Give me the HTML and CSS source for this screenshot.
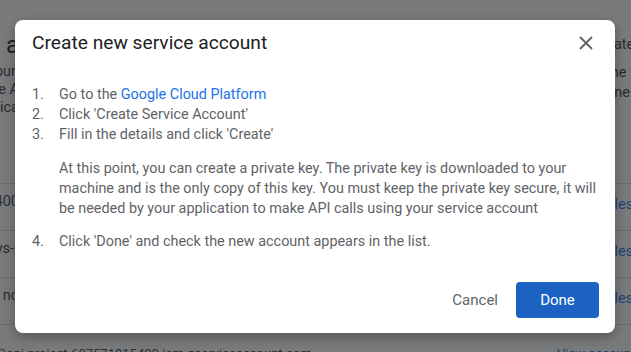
FILE: index.html
```html
<!DOCTYPE html>
<html lang="en">
<head>
    <meta charset="UTF-8">
    <meta name="viewport" content="width=device-width, initial-scale=1.0">
    <title>Create new service account</title>
    <link rel="stylesheet" href="styles.css">
</head>
<body>
    <!-- page behind the dialog -->
    <div class="page">
        <div class="page-top">
            <div class="edge-left">
                <div class="page-title">Create a</div>
                <div class="page-text">Service accoun</div>
                <div class="page-text">Create a service A</div>
                <div class="page-text">for the applica</div>
            </div>
            <div class="edge-right">
                <div class="page-action">Create</div>
                <div class="page-text">the</div>
                <div class="page-text">one</div>
            </div>
        </div>
        <div class="page-table">
            <div class="row"><div class="edge-left">607571915400</div><div class="edge-right link">Files</div></div>
            <div class="row"><div class="edge-left">firebase-adminsdk-ys-r</div><div class="edge-right link">Files</div></div>
            <div class="row"><div class="edge-left">App Engine default service account no</div><div class="edge-right link">Files</div></div>
            <div class="row last"><div class="edge-left">account@api-project-607571915400.iam.gserviceaccount.com</div><div class="edge-right link">View account</div></div>
        </div>
    </div>

    <div class="scrim"></div>

    <div class="dialog">
        <div class="dialog-head">
            <h1 class="dialog-title">Create new service account</h1>
            <button class="close" aria-label="Close">
                <svg width="14" height="14" viewBox="0 0 14 14"><path d="M1 1L13 13M13 1L1 13" stroke="#5f6368" stroke-width="1.8" fill="none"/></svg>
            </button>
        </div>
        <ol class="steps">
            <li><span class="num">1.</span><span>Go to the <a href="#">Google Cloud Platform</a></span></li>
            <li><span class="num">2.</span><span>Click 'Create Service Account'</span></li>
            <li><span class="num">3.</span><span>Fill in the details and click 'Create'</span></li>
            <li class="note">At this point, you can create a private key. The private key is downloaded to your machine and is the only copy of this key. You must keep the private key secure, it will be needed by your application to make API calls using your service account</li>
            <li><span class="num">4.</span><span>Click 'Done' and check the new account appears in the list.</span></li>
        </ol>
        <div class="actions">
            <button class="btn btn-text">Cancel</button>
            <button class="btn btn-primary">Done</button>
        </div>
    </div>
</body>
</html>
```

FILE: styles.css
```css
body {
    margin: 0;
    width: 631px;
    height: 352px;
    overflow: hidden;
    font-family: Roboto, "Liberation Sans", Arial, sans-serif;
    background: #fff;
    position: relative;
}

/* background page */
.page {
    height: 352px;
    overflow: hidden;
    color: #3c4043;
    font-size: 14.5px;
}
.page-top {
    display: flex;
    justify-content: space-between;
    height: 183px;
    padding-top: 31px;
    box-sizing: border-box;
}
.edge-left {
    width: 19px;
    display: flex;
    flex-direction: column;
    align-items: flex-end;
    overflow: hidden;
    white-space: nowrap;
}
.edge-right {
    width: 28px;
    overflow: hidden;
    white-space: nowrap;
    display: flex;
    flex-direction: column;
}
.page-title {
    font-size: 24px;
    line-height: 28px;
    color: #202124;
    margin-bottom: 4px;
}
.page-text {
    line-height: 18px;
    color: #3c4043;
}
.page-action {
    line-height: 28px;
    margin-bottom: 4px;
    margin-left: -11px;
}
.page-top .edge-right .page-text {
    line-height: 20px;
    margin-left: 3px;
}
.page-table .row {
    display: flex;
    justify-content: space-between;
    align-items: flex-start;
    height: 47px;
    padding-top: 9px;
    border-top: 1px solid #dadce0;
    box-sizing: border-box;
}
.page-table .row .edge-right {
    padding-top: 3px;
}
.page-table .row.last {
    padding-top: 21px;
    font-size: 13px;
}
.page-table .row.last .edge-left {
    width: 0;
    align-items: flex-start;
    overflow: visible;
    margin-left: -52px;
}
.page-table .row.last .edge-right {
    padding-top: 0;
    width: 74px;
}
.link {
    color: #1a73e8;
}

.scrim {
    position: absolute;
    inset: 0;
    background: rgba(32, 33, 36, 0.6);
}

/* dialog */
.dialog {
    position: absolute;
    left: 15px;
    top: 20px;
    width: 600px;
    height: 313px;
    box-sizing: border-box;
    background: #fff;
    border-radius: 8px;
    box-shadow: 0 4px 12px rgba(0, 0, 0, 0.3);
    padding: 11px 16px 15px 17px;
    display: flex;
    flex-direction: column;
}
.dialog-head {
    display: flex;
    justify-content: space-between;
    align-items: center;
}
.dialog-title {
    margin: 0;
    font-size: 19.2px;
    line-height: 24px;
    font-weight: 400;
    color: #202124;
}
.close {
    border: none;
    background: none;
    padding: 0;
    width: 14px;
    height: 14px;
    margin-right: 6px;
    display: flex;
}
.steps {
    list-style: none;
    margin: 30px 0 0;
    padding: 0;
    font-size: 14.4px;
    line-height: 20px;
    color: #5f6368;
}
.steps li {
    display: flex;
}
.steps .num {
    width: 27px;
    flex: none;
}
.steps .note {
    display: block;
    padding-left: 27px;
    margin: 14px 0 13px;
}
.steps a {
    color: #1a73e8;
    text-decoration: none;
}
.actions {
    margin-top: auto;
    display: flex;
    justify-content: flex-end;
    align-items: center;
    gap: 2px;
}
.btn {
    font-family: inherit;
    font-size: 15px;
    border: none;
    border-radius: 4px;
    height: 36px;
    padding: 0 16px;
    cursor: pointer;
}
.btn-text {
    background: none;
    color: #5f6368;
}
.btn-primary {
    width: 83px;
    background: #1b62c2;
    color: #fff;
}
```
